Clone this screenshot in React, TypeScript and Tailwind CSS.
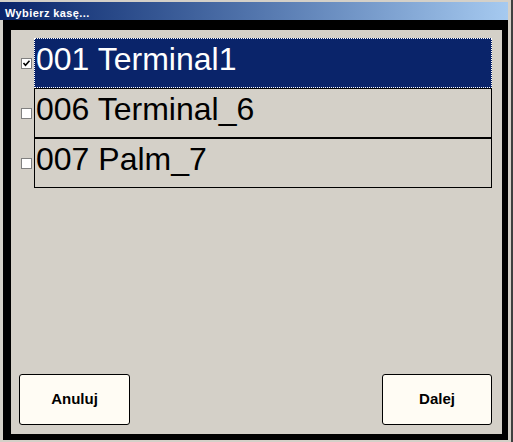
const items = [
  { code: "001", name: "Terminal1", selected: true },
  { code: "006", name: "Terminal_6", selected: false },
  { code: "007", name: "Palm_7", selected: false },
];

function CheckBox({ checked }: { checked: boolean }) {
  return (
    <div className="mt-[20px] mr-[2px] h-[11px] w-[11px] shrink-0 border border-[#808080] bg-white">
      {checked && (
        <svg width="9" height="9" viewBox="0 0 9 9" className="block">
          <path d="M1.5 4 L3.5 6.2 L7.5 1.8" fill="none" stroke="#000" strokeWidth="1.6" />
        </svg>
      )}
    </div>
  );
}

export default function App() {
  return (
    <div
      className="flex h-[442px] w-[513px] flex-col border-r-2 border-r-[#404040] bg-[#d4d0c8] pt-[2px] pr-[3px] pb-[2px]"
      style={{ fontFamily: '"Liberation Sans", Arial, sans-serif' }}
    >
      <div className="h-[18px] shrink-0 bg-linear-to-r from-[#0a246a] to-[#a6caf0] pl-[5px] pt-[6px] text-[11px] leading-[11px] font-bold tracking-[0.4px] text-white">
        Wybierz kasę...
      </div>

      <div className="ml-[3px] flex flex-1 bg-black pt-[10px] pr-[6px] pb-[6px] pl-[8px]">
        <div className="flex flex-1 flex-col bg-[#d4d0c8]">
          <div className="flex flex-col pt-[8px] pr-[10px] pl-[10px]">
            {items.map((it) => (
              <div key={it.code} className="flex items-start">
                <CheckBox checked={it.selected} />
                <div
                  className={
                    it.selected
                      ? "h-[50px] flex-1 border border-dotted border-white bg-[#0a246a] pt-[4px] pl-[1px] text-[32px] leading-[32px] text-white"
                      : "h-[50px] flex-1 border border-black pt-[4px] pl-[1px] text-[32px] leading-[32px] text-black"
                  }
                >
                  {it.code} {it.name}
                </div>
              </div>
            ))}
          </div>

          <div className="flex-1" />

          <div className="flex justify-between pr-[10px] pb-[9px] pl-[8px]">
            <button className="h-[51px] w-[111px] rounded-[3px] border border-black bg-[#fffcf4] text-[15px] font-bold text-black">
              Anuluj
            </button>
            <button className="h-[51px] w-[110px] rounded-[3px] border border-black bg-[#fffcf4] text-[15px] font-bold text-black">
              Dalej
            </button>
          </div>
        </div>
      </div>
    </div>
  );
}
